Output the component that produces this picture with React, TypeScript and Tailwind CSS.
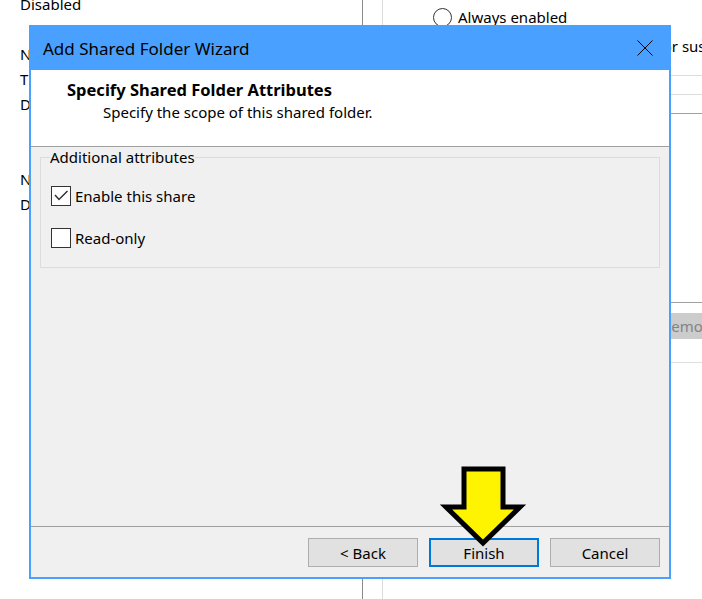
export default function App() {
  return (
    <div className="relative h-[599px] w-[702px] overflow-hidden bg-white font-['Noto_Sans',sans-serif] text-[15px] leading-[20px] text-black">
      {/* window behind the wizard */}
      <div className="flex h-full">
        <div className="w-[363px] shrink-0 border-r border-[#8a8a8a] pl-5 [font-kerning:none]">
          <div className="-mt-[8px] leading-[25px]">
            <p>Disabled</p>
            <p className="h-[25px]" />
            <p>Name:</p>
            <p className="tracking-[1.5px]">Type:</p>
            <p>Description:</p>
            <p className="h-[50px]" />
            <p>Name:</p>
            <p>Description:</p>
          </div>
        </div>
        <div className="w-[20px] shrink-0 border-r border-[#dcdcdc]" />
        <div className="flex min-w-0 flex-1 flex-col whitespace-nowrap">
          <div className="ml-[50px] mt-[7px] flex h-[20px] items-center gap-[6px]">
            <span className="size-[19px] rounded-full border border-[#333]" />
            <span>Always enabled</span>
          </div>
          <div className="ml-[50px] mt-[9px] flex h-[20px] items-center gap-[8px]">
            <span className="size-[19px] rounded-full border border-[#333]" />
            <span>Enabled only on battery power or suspend</span>
          </div>
          <div className="ml-5 mt-[19px] h-[19px] border-t border-[#dcdcdc]" />
          <div className="ml-5 h-[19px] border-t border-[#dcdcdc]" />
          <div className="ml-5 h-[189px] border-t border-[#a0a0a0]" />
          <div className="ml-5 h-[60px] border-t border-[#a0a0a0] pl-[249px] pt-[10px]">
            <div className="flex h-[26px] w-[90px] items-center bg-[#cccccc] pl-[10px] text-[#838383]">
              Remove
            </div>
          </div>
          <div className="ml-5 border-t border-[#e0e0e0]" />
        </div>
      </div>

      {/* wizard dialog */}
      <div className="absolute left-[29px] top-[25px] flex h-[554px] w-[642px] flex-col border-2 border-[#49a0fe] bg-[#f0f0f0]">
        <div className="flex h-[43px] shrink-0 items-center justify-between bg-[#49a0fe] pl-[12px] pr-[16px]">
          <span className="text-[17px]">Add Shared Folder Wizard</span>
          <svg width="16" height="16" viewBox="0 0 16 16" className="mt-[-1px]">
            <path d="M0.5 0.5 L15.5 15.5 M15.5 0.5 L0.5 15.5" stroke="#000" strokeWidth="1" fill="none" />
          </svg>
        </div>
        <div className="h-[77px] shrink-0 border-b border-[#a0a0a0] bg-white pl-[36px] pt-[10px]">
          <p className="text-[16.5px] font-bold">Specify Shared Folder Attributes</p>
          <p className="mt-[2px] pl-[36px]">Specify the scope of this shared folder.</p>
        </div>
        <div className="h-[379px] shrink-0 px-[9px]">
          <fieldset className="h-[121px] border border-[#dcdcdc] pl-[10px]">
            <legend className="-ml-[1px] px-0">Additional attributes</legend>
            <div className="mt-[19px] flex flex-col gap-[22px]">
              <label className="flex h-[20px] items-center gap-[4px]">
                <span className="size-[20px] border border-[#333] bg-white">
                  <svg width="18" height="18" viewBox="0 0 18 18">
                    <path d="M3 8 L7 12.5 L15.5 4" stroke="#333" strokeWidth="1.5" fill="none" />
                  </svg>
                </span>
                <span>Enable this share</span>
              </label>
              <label className="flex h-[20px] items-center gap-[4px]">
                <span className="size-[20px] border border-[#333] bg-white" />
                <span>Read-only</span>
              </label>
            </div>
          </fieldset>
        </div>
        <div className="flex flex-1 justify-end gap-[11px] border-t border-[#a0a0a0] pr-[9px] pt-[11px]">
          <button className="flex h-[29px] w-[110px] items-center justify-center border border-[#adadad] bg-[#e1e1e1]">
            &lt; Back
          </button>
          <button className="flex h-[29px] w-[110px] items-center justify-center border-2 border-[#0078d7] bg-[#e1e1e1]">
            Finish
          </button>
          <button className="flex h-[29px] w-[110px] items-center justify-center border border-[#adadad] bg-[#e1e1e1]">
            Cancel
          </button>
        </div>
      </div>

      {/* annotation arrow */}
      <svg className="absolute left-[430px] top-[460px]" width="110" height="92" viewBox="0 0 110 92">
        <polygon
          points="34,9 73,9 73,47 90,47 53,83 16,47 34,47"
          fill="#fff400"
          stroke="#000"
          strokeWidth="5"
          strokeLinejoin="miter"
        />
      </svg>
    </div>
  );
}
